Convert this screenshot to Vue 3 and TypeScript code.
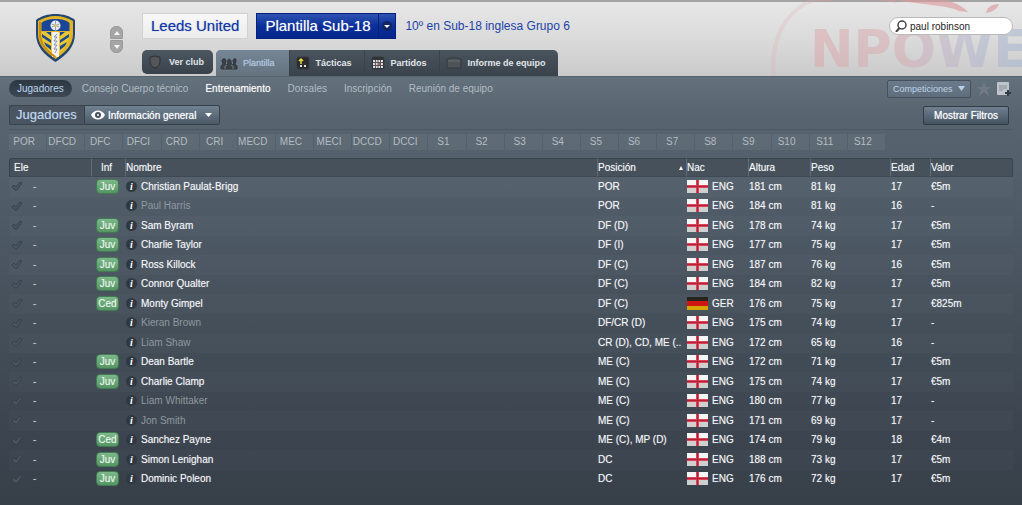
<script setup lang="ts">
import { ref } from 'vue'

interface Player {
  name: string
  info: string
  position: string
  nation: 'ENG' | 'GER'
  height: number
  weight: number
  age: number
  value: string
}

const p = (
  name: string, info: string, position: string, nation: 'ENG' | 'GER',
  height: number, weight: number, age: number, value: string,
): Player => ({ name, info, position, nation, height, weight, age, value })

const players: Player[] = [
  p('Christian Paulat-Brigg', 'Juv', 'POR', 'ENG', 181, 81, 17, '€5m'),
  p('Paul Harris', '', 'POR', 'ENG', 184, 81, 16, '-'),
  p('Sam Byram', 'Juv', 'DF (D)', 'ENG', 178, 74, 17, '€5m'),
  p('Charlie Taylor', 'Juv', 'DF (I)', 'ENG', 177, 75, 17, '€5m'),
  p('Ross Killock', 'Juv', 'DF (C)', 'ENG', 187, 76, 16, '€5m'),
  p('Connor Qualter', 'Juv', 'DF (C)', 'ENG', 184, 82, 17, '€5m'),
  p('Monty Gimpel', 'Ced', 'DF (C)', 'GER', 176, 75, 17, '€825m'),
  p('Kieran Brown', '', 'DF/CR (D)', 'ENG', 175, 74, 17, '-'),
  p('Liam Shaw', '', 'CR (D), CD, ME (..', 'ENG', 172, 65, 16, '-'),
  p('Dean Bartle', 'Juv', 'ME (C)', 'ENG', 172, 71, 17, '€5m'),
  p('Charlie Clamp', 'Juv', 'ME (C)', 'ENG', 175, 74, 17, '€5m'),
  p('Liam Whittaker', '', 'ME (C)', 'ENG', 180, 77, 17, '-'),
  p('Jon Smith', '', 'ME (C)', 'ENG', 171, 69, 17, '-'),
  p('Sanchez Payne', 'Ced', 'ME (C), MP (D)', 'ENG', 174, 79, 18, '€4m'),
  p('Simon Lenighan', 'Juv', 'DC', 'ENG', 188, 73, 17, '€5m'),
  p('Dominic Poleon', 'Juv', 'DC', 'ENG', 176, 72, 17, '€5m'),
]

const slots = [
  'POR', 'DFCD', 'DFC', 'DFCI', 'CRD', 'CRI', 'MECD', 'MEC', 'MECI', 'DCCD', 'DCCI',
  'S1', 'S2', 'S3', 'S4', 'S5', 'S6', 'S7', 'S8', 'S9', 'S10', 'S11', 'S12',
]

const sections = [
  { label: 'Jugadores', state: 'current' },
  { label: 'Consejo Cuerpo técnico', state: '' },
  { label: 'Entrenamiento', state: 'bright' },
  { label: 'Dorsales', state: '' },
  { label: 'Inscripción', state: '' },
  { label: 'Reunión de equipo', state: '' },
]

const search = ref('paul robinson')
const squad = ref('Plantilla Sub-18')
const view = ref('Información general')
const competition = ref('Competiciones')
</script>

<template>
  <div class="page">
    <header class="top">
      <svg class="sponsor" width="260" height="76" viewBox="0 0 260 76" aria-hidden="true">
        <defs>
          <linearGradient id="sponsorFill" x1="53" x2="270" y1="0" y2="0" gradientUnits="userSpaceOnUse">
            <stop offset="0" stop-color="#dca6aa" />
            <stop offset=".4" stop-color="#d7a9b0" />
            <stop offset=".7" stop-color="#b5b5cd" />
            <stop offset="1" stop-color="#9db3d0" />
          </linearGradient>
        </defs>
        <path d="M12 78C8 44 20 10 56 -2" fill="none" stroke="#dcaaae" stroke-width="4" opacity=".25" />
        <path d="M56 0C84 -2 112 -2 134 1" fill="none" stroke="#d99aa0" stroke-width="3" opacity=".5" />
        <path d="M134 0h50c10 3 18 7 22 12l-9 -1C186 5 160 5 134 0zM224 13c1-5 5-9 13-9c-2 5-6 8-13 9z" fill="#dc9a9e" opacity=".65" />
        <text x="48" y="67" class="sponsor-text" fill="url(#sponsorFill)">NPOWE</text>
      </svg>

      <div class="crest-area">
        <svg class="crest" width="41" height="50" viewBox="0 0 41 50" role="img" aria-label="Leeds United">
          <path d="M20.500 1C13 1 6 3 1 7v14c0 12 8 21 19.500 28C32 42 40 33 40 21V7C35 3 28 1 20.500 1z" fill="#24476f" />
          <path d="M20.500 3C14 3 8 5 3 8v13c0 10 7 18 17.500 25C31 39 38 31 38 21V8C33 5 27 3 20.500 3z" fill="#e3b526" />
          <path d="M20.500 6C14 6 10 7 6.500 10v8h28v-8C31 7 27 6 20.500 6z" fill="#1b4596" />
          <path d="M6.500 19h28c0 11-5 18-14 24C11 37 6.500 30 6.500 19z" fill="#e8c836" />
          <path d="M7 21l9 6v3L7 24zM9 29l7 4v4l-5-4zM34 21l-9 6v3l9-6zM32 29l-7 4v4l5-4zM11 19l5 4v-4zM30 19l-5 4v-4z" fill="#20498c" />
          <rect x="17" y="19" width="7" height="25" rx="1" fill="#f4f1ec" />
          <path d="M22 21l-3 3h3l-3 4h3l-3 4h3l-3 4h3l-2 4" fill="none" stroke="#8b91b5" />
          <circle cx="20.500" cy="12.500" r="5" fill="#e9edf2" />
          <path d="M20.500 8v9M16.500 11l8 3M24.500 11l-8 3" stroke="#8da0be" />
          <circle cx="20.500" cy="12.500" r="1.500" fill="#e3c04a" />
          <path d="M5 9v12c0 9 5 16 15.500 23" fill="none" stroke="#c98b15" stroke-width="2" />
        </svg>
        <div class="spinner">
          <button type="button" aria-label="Anterior"><svg width="6" height="4" viewBox="0 0 6 4"><path d="M0 4l3-4 3 4z" fill="#f4f4f4" /></svg></button>
          <button type="button" aria-label="Siguiente"><svg width="6" height="4" viewBox="0 0 6 4"><path d="M0 0h6L3 4z" fill="#f4f4f4" /></svg></button>
        </div>
      </div>

      <div class="heading">
        <div class="title-row">
          <h1 class="club">Leeds United</h1>
          <div class="squad drop">
            <select v-model="squad" aria-label="Plantilla"><option>Plantilla Sub-18</option></select>
            <span class="squad-arrow"><svg width="10" height="10" viewBox="0 0 10 10"><circle cx="5" cy="5" r="5" fill="#122563" /><path d="M2 4h6L5 7z" fill="#fff" /></svg></span>
          </div>
          <a class="standing" href="#">10º en Sub-18 inglesa Grupo 6</a>
          <label class="search">
            <svg width="12" height="12" viewBox="0 0 12 12" aria-hidden="true"><circle cx="7" cy="5" r="4" fill="none" stroke="#444" stroke-width="1.500" /><path d="M4.500 8L1 12" stroke="#444" stroke-width="2" /></svg>
            <input v-model="search" type="search" aria-label="Buscar">
          </label>
        </div>
        <nav class="tabs" aria-label="Club">
          <a class="tab club-tab" href="#">
            <svg width="16" height="14" viewBox="0 0 16 14"><path d="M3 2c3 0 4-1 5-1s2 1 5 1v5c0 3-2 5-5 6c-3-1-5-3-5-6z" fill="#54575a" stroke="#2c3034" /></svg>Ver club
          </a>
          <div class="tab-group">
            <a class="tab active" href="#">
              <svg width="18" height="13" viewBox="0 0 18 13"><path d="M2 4c0-3 4-3 4 0l-1 3l2 1c0-1 1-1 1-2C6 1 12 1 11 6l1 2l2-1l-1-3c0-3 4-3 3 0l-1 3l2 2v3H1V9l2-2z" fill="#3c4248" stroke="#30363d" /><path d="M5 12V9l2-1M13 12V9l-2-1" stroke="#707980" fill="none" /></svg>Plantilla
            </a>
            <a class="tab" href="#">
              <svg width="14" height="14" viewBox="0 0 14 14"><rect x="1" y="1" width="12" height="12" rx="2" fill="#292b2d" stroke="#343a3f" /><path d="M5 8V3M3 5l2-2l2 2" fill="none" stroke="#e4da3c" stroke-width="1.500" /><path d="M4 9h2v2H4zM8 9h2v2H8z" fill="#ddd" /></svg>Tácticas
            </a>
            <a class="tab" href="#">
              <svg width="14" height="14" viewBox="0 0 14 14"><rect x="1" y="1" width="12" height="12" rx="2" fill="#303235" stroke="#33393e" /><path d="M2 4h10v8H2z" fill="#ddd" /><path d="M2 6.500h10M2 9.500h10M4.500 4v8M7 4v8M9.500 4v8" stroke="#55595c" /><path d="M7 7h2v2H7z" fill="#c8545a" /></svg>Partidos
            </a>
            <a class="tab" href="#">
              <svg width="16" height="14" viewBox="0 0 16 14"><path d="M1 3h2l1-1h8l1 1h2v9H1z" fill="#4d5357" stroke="#33393e" /><path d="M2 5h12" stroke="#6a7074" /></svg>Informe de equipo
            </a>
          </div>
        </nav>
      </div>
    </header>

    <main class="body">
      <div class="bar">
        <nav class="sections" aria-label="Secciones">
          <a v-for="s in sections" :key="s.label" href="#" :class="s.state">{{ s.label }}</a>
        </nav>
        <div class="tools">
          <div class="competition drop">
            <select v-model="competition" aria-label="Competiciones"><option>Competiciones</option></select>
            <svg class="arrow" width="7" height="5" viewBox="0 0 7 5"><path d="M0 0h7L3.500 5z" fill="#b9d3ec" /></svg>
          </div>
          <button type="button" class="plain" aria-label="Favorito"><svg width="14" height="14" viewBox="0 0 14 14"><path d="M7 0l2 5h5l-4 3l2 6l-5-4l-5 4l2-6l-4-3h5z" fill="#717b85" /></svg></button>
          <button type="button" class="plain" aria-label="Añadir nota"><svg width="14" height="14" viewBox="0 0 14 14"><rect width="12" height="13" rx="1" fill="#bfc4c8" /><path d="M2 4h8M2 6h8M2 8h4" stroke="#868f97" /><path d="M8 11h6M11 8v6" stroke="#333c45" stroke-width="2" /></svg></button>
        </div>
      </div>

      <div class="bar second">
        <h2 class="panel-title">Jugadores</h2>
        <div class="view drop">
          <svg class="eye" width="14" height="10" viewBox="0 0 14 10" aria-hidden="true"><path d="M0 5C3 -1 11 -1 14 5C11 11 3 11 0 5z" fill="#fff" /><circle cx="7" cy="5" r="3" fill="#46525e" /><circle cx="7" cy="5" r="1" fill="#fff" /></svg>
          <select v-model="view" aria-label="Vista"><option>Información general</option></select>
          <svg class="arrow" width="7" height="4" viewBox="0 0 7 4"><path d="M0 0h7L3.500 4z" fill="#fff" /></svg>
        </div>
        <button type="button" class="filters">Mostrar Filtros</button>
      </div>

      <div class="slots">
        <button v-for="s in slots" :key="s" type="button">{{ s }}</button>
      </div>

      <table class="players">
        <colgroup>
          <col class="w-pick"><col class="w-inf"><col><col class="w-pos"><col class="w-mid"><col class="w-mid"><col class="w-kg"><col class="w-age"><col class="w-val">
        </colgroup>
        <thead>
          <tr>
            <th class="pick">Ele</th>
            <th class="inf">Inf</th>
            <th>Nombre</th>
            <th aria-sort="ascending">
              <span class="sorted">Posición<svg width="4" height="4" viewBox="0 0 4 4"><path d="M0 4l2-4l2 4z" fill="#fff" /></svg></span>
            </th>
            <th>Nac</th>
            <th>Altura</th>
            <th>Peso</th>
            <th>Edad</th>
            <th class="val">Valor</th>
          </tr>
        </thead>
        <tbody>
          <tr v-for="pl in players" :key="pl.name">
            <td>
              <span class="pick-cell">
                <label class="tick">
                  <input type="checkbox" :aria-label="'Elegir a ' + pl.name">
                  <svg width="11" height="10" viewBox="0 0 11 10"><path d="M1 6l2-2l2 2l4-5l2 1l-5 7H4z" fill="#4b555f" stroke="#38424b" /></svg>
                </label>
                <span>-</span>
              </span>
            </td>
            <td class="inf-cell"><span v-if="pl.info" class="badge">{{ pl.info }}</span></td>
            <td>
              <span class="name" :class="{ dim: !pl.info }">
                <button type="button" class="info" :aria-label="'Información de ' + pl.name">i</button>{{ pl.name }}
              </span>
            </td>
            <td>{{ pl.position }}</td>
            <td>
              <span class="nation">
                <svg v-if="pl.nation === 'ENG'" width="21" height="13" viewBox="0 0 21 13" aria-hidden="true">
                  <rect width="21" height="7" fill="#f5f5f5" /><rect y="7" width="21" height="6" fill="#cfcfcf" />
                  <path d="M9 0h3v13H9zM0 5h21v3H0z" fill="#d9465a" /><path d="M0 6.500h21M10.500 0v13" stroke="#b81f37" />
                </svg>
                <svg v-else width="21" height="13" viewBox="0 0 21 13" aria-hidden="true">
                  <rect width="21" height="5" fill="#27231f" /><rect y="4" width="21" height="5" fill="#cf1512" /><rect y="9" width="21" height="4" fill="#d5a508" />
                </svg>
                {{ pl.nation }}
              </span>
            </td>
            <td>{{ pl.height }} cm</td>
            <td>{{ pl.weight }} kg</td>
            <td>{{ pl.age }}</td>
            <td>{{ pl.value }}</td>
          </tr>
        </tbody>
      </table>
    </main>
  </div>
</template>

<style>
body {
  background: #373f49;
}
</style>

<style scoped>
.page {
  display: flex;
  flex-direction: column;
  min-height: 100vh;
  font-family: "Liberation Sans", Arial, sans-serif;
  font-size: 10px;
  color: #f4f6f8;
}
.page * {
  box-sizing: border-box;
}
.page svg {
  display: block;
  flex: none;
}
a {
  text-decoration: none;
  color: inherit;
}
button,
select,
input {
  font: inherit;
  color: inherit;
  border: 0;
  margin: 0;
  padding: 0;
  background: none;
}
select,
input {
  appearance: none;
  outline: 0;
}
h1,
h2 {
  margin: 0;
  font-weight: 400;
}

.top {
  position: relative;
  display: flex;
  padding-top: 11px;
  border-top: 2px solid #a3a3a3;
  background: linear-gradient(#e7e7e7, #dcdcdc 45%, #cacaca);
}
.sponsor {
  position: absolute;
  right: 0;
  bottom: 0;
}
.sponsor-text {
  font: 700 52px "DejaVu Sans", sans-serif;
  opacity: .5;
}
.crest-area {
  display: flex;
  width: 142px;
  padding-left: 35px;
  gap: 34px;
}
.spinner {
  display: flex;
  flex-direction: column;
  gap: 1px;
  margin-top: 13px;
}
.spinner button {
  display: flex;
  align-items: center;
  justify-content: center;
  width: 13px;
  height: 13px;
  background: #a5a5a5;
  border: 1px solid #999;
  border-radius: 6px 6px 1px 1px;
}
.spinner button + button {
  border-radius: 1px 1px 6px 6px;
}
.heading {
  flex: 1;
  position: relative;
}
.title-row {
  display: flex;
  align-items: center;
  height: 26px;
  margin-bottom: 11px;
}
.club {
  height: 26px;
  padding: 0 8px;
  border: 1px solid #d2d2d2;
  background: linear-gradient(#f8f8f8, #ececec);
  color: #1238a6;
  font-size: 15px;
  line-height: 24px;
  text-shadow: 0 0 1px #1238a680;
}
.drop {
  position: relative;
  display: flex;
  align-items: center;
}
.drop select {
  cursor: pointer;
}
.drop .arrow {
  position: absolute;
  right: 7px;
  pointer-events: none;
}
.squad {
  height: 26px;
  margin: 0 9px 0 8px;
  border: 1px solid #04207c;
  background: linear-gradient(#2f54b2, #0a2f9a 50%, #02268c);
}
.squad select {
  height: 24px;
  width: 138px;
  padding-left: 8px;
  font-size: 15px;
  line-height: 22px;
  color: #fff;
  text-shadow: 0 0 1px #ffffff80;
}
.squad-arrow {
  position: absolute;
  right: 0;
  display: flex;
  align-items: center;
  height: 24px;
  padding: 0 3px;
  border-left: 1px solid #071f72;
  pointer-events: none;
}
.standing {
  color: #1c43a8;
  font-size: 12px;
  white-space: nowrap;
}
.search {
  display: flex;
  align-items: center;
  gap: 3px;
  width: 124px;
  height: 18px;
  margin: 0 9px 0 auto;
  padding-left: 5px;
  border: 1px solid #b9b9b9;
  border-radius: 9px;
  background: #fff;
}
.search input {
  width: 90px;
  color: #222;
}

.tabs {
  display: flex;
  align-items: flex-start;
  gap: 3px;
  font-size: 9px;
  font-weight: 700;
  color: #e1e5e9;
}
.tab {
  display: flex;
  align-items: center;
  height: 26px;
  padding: 0 12px 0 6px;
  gap: 6px;
  border-left: 1px solid #3a434c;
  white-space: nowrap;
}
.tab:first-child {
  border-left: 0;
}
.club-tab {
  height: 24px;
  padding: 0 9px 0 5px;
  border-radius: 5px;
  background: linear-gradient(#4c5762, #39424b);
}
.tab-group {
  display: flex;
  overflow: hidden;
  border-radius: 5px 5px 0 0;
  background: linear-gradient(#4a545e, #3a434b);
}
.tab.active {
  padding: 0 14px 0 4px;
  gap: 5px;
  font-weight: 400;
  color: #b4cbe2;
  text-shadow: 0 0 1px #b4cbe2a0;
  background: linear-gradient(#758696, #65737f);
}

.body {
  flex: 1;
  padding: 3px 9px 15px;
  border-top: 1px solid #56636e;
  background: linear-gradient(#63717d, #58656f 9%, #525e6a 24%, #47525d 50%, #3d4650 80%, #373f49);
}
.bar {
  display: flex;
  align-items: center;
  height: 17px;
}
.sections {
  display: flex;
  align-items: center;
  gap: 17px;
  color: #b3bbc2;
}
.sections a {
  white-space: nowrap;
}
.sections .current {
  padding: 0 8px;
  margin-right: -7px;
  border-radius: 9px;
  background: linear-gradient(#2d3742, #3d4854);
  color: #bdd6ee;
  line-height: 17px;
}
.sections .bright {
  color: #fff;
  text-shadow: 0 0 1px #ffffff80;
}
.tools {
  display: flex;
  align-items: center;
  gap: 6px;
  margin-left: auto;
  padding-right: 2px;
}
.competition {
  width: 84px;
  height: 18px;
  border: 1px solid #44505c;
  border-radius: 2px;
  background: linear-gradient(#6c7b8b, #5f6d7b);
  color: #bdd5ec;
  font-size: 9px;
  text-shadow: 0 0 1px #bdd5ec80;
}
.competition .arrow {
  right: 5px;
}
.competition select {
  width: 100%;
  height: 16px;
  padding-left: 5px;
}
.second {
  height: 20px;
  margin-top: 8px;
}
.panel-title {
  height: 20px;
  width: 75px;
  padding-left: 6px;
  border: 1px solid #3a444f;
  border-right: 0;
  border-radius: 2px 0 0 2px;
  background: #4a5561;
  color: #bdd6f0;
  font-size: 13px;
  line-height: 18px;
  text-shadow: 0 0 1px #bdd6f080;
}
.view {
  width: 136px;
  height: 20px;
  border: 1px solid #36414c;
  border-radius: 0 2px 2px 0;
  background: linear-gradient(#708191, #4c5a67);
}
.view select {
  width: 100%;
  height: 18px;
  padding-left: 23px;
  color: #fff;
  text-shadow: 0 0 1px #ffffffb0;
}
.eye {
  position: absolute;
  left: 6px;
  pointer-events: none;
}
.filters {
  width: 86px;
  height: 19px;
  margin: 0 4px 0 auto;
  border: 1px solid #313b46;
  border-radius: 2px;
  background: linear-gradient(#6f8091, #455260);
  color: #fff;
  text-shadow: 0 0 1px #ffffffb0;
}

.slots {
  display: flex;
  margin-top: 4px;
  padding: 4px 127px 0 0;
  border-top: 1px solid #4c5864;
}
.slots button {
  flex: 1 1 0;
  min-width: 0;
  height: 16px;
  padding: 0 7px 2px 0;
  border-right: 1px solid #54606c;
  background: #ffffff0d;
  color: #b4bcc3;
}

.players {
  width: 100%;
  margin-top: 8px;
  border-collapse: separate;
  border-spacing: 0;
  table-layout: fixed;
  text-shadow: 0 0 1px #ffffff70;
}
.w-pick { width: 82px; }
.w-inf { width: 34px; }
.w-pos { width: 89px; }
.w-mid { width: 62px; }
.w-kg { width: 80px; }
.w-age { width: 40px; }
.w-val { width: 83px; }
th {
  height: 19px;
  padding: 0;
  border-left: 1px solid #606b75;
  border-top: 1px solid #39434c;
  border-bottom: 1px solid #3f4953;
  background: #46515b;
  font-weight: 400;
  text-align: left;
}
th:first-child {
  border-left: 1px solid #39434c;
  border-radius: 3px 0 0 0;
}
th:last-child {
  border-right: 1px solid #39434c;
  border-radius: 0 3px 0 0;
}
th.pick {
  padding-left: 4px;
}
th.inf {
  padding-left: 9px;
}
.sorted {
  display: flex;
  align-items: center;
  justify-content: space-between;
  padding-right: 3px;
}
td {
  height: 20px;
  padding: 0 0 2px 1px;
  white-space: nowrap;
}
tr:nth-child(even) td {
  height: 19px;
}
tbody tr:nth-child(odd) {
  background: #ffffff05;
}
.pick-cell {
  display: flex;
  align-items: center;
  gap: 11px;
  padding-left: 1px;
  color: #c3c8cd;
}
.tick {
  position: relative;
}
.tick input {
  position: absolute;
  inset: 0;
  opacity: 0;
}
td.inf-cell {
  padding-left: 5px;
}
.badge {
  display: block;
  width: 23px;
  height: 15px;
  border: 1px solid #437a53;
  border-radius: 4px;
  background: linear-gradient(#7cb98a, #549563);
  color: #e9f5ec;
  line-height: 13px;
  text-align: center;
}
.name {
  display: flex;
  align-items: center;
  gap: 4px;
}
.info {
  width: 11px;
  height: 11px;
  border-radius: 50%;
  background: #303941;
  color: #fff;
  font: italic 700 10px/11px "Liberation Serif", serif;
}
.dim {
  color: #8f979f;
  text-shadow: none;
}
.nation {
  display: flex;
  align-items: center;
  gap: 4px;
}
</style>
